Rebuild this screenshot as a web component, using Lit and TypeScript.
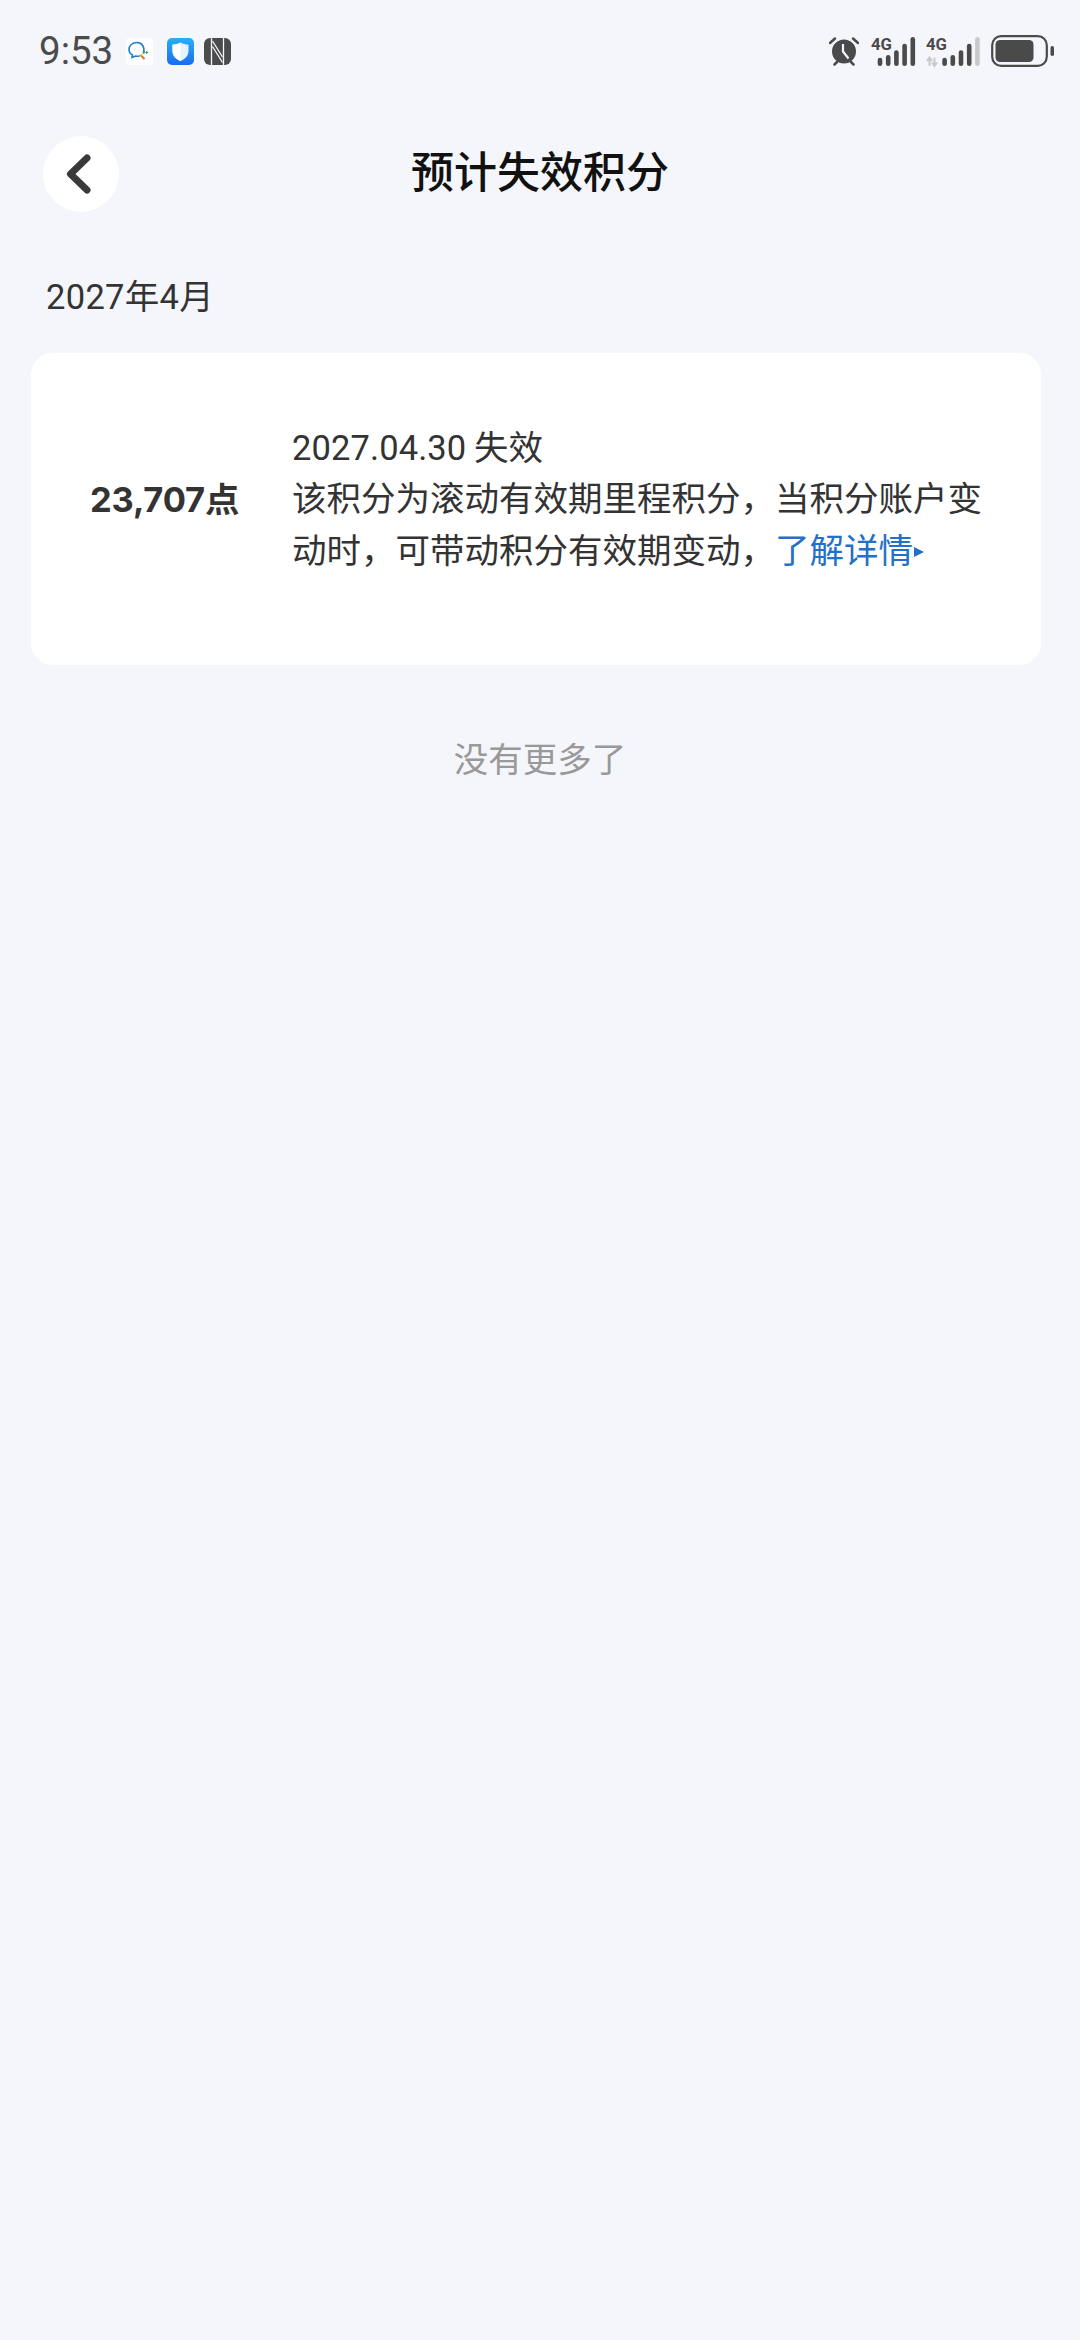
import { LitElement, html, css, svg } from "lit";
import { customElement } from "lit/decorators.js";

const signal = (second: boolean) => {
  const start = second ? 16.3 : 6.7;
  const heights = [8.3, 11, 15.7, 22.3, 29];
  return svg`
  <svg class="sig" width="${second ? 53 : 43}" height="29" viewBox="0 0 ${second ? 53 : 43} 29">
    <text x="0" y="13" textLength="21" lengthAdjust="spacingAndGlyphs" font-family="Roboto, sans-serif" font-weight="700" font-size="17" fill="#4a4a4a">4G</text>
    ${second ? svg`<path d="M3.500 29V21M1 24L3.500 20.500L6 24M8.500 20.500V28.500M6 25.500L8.500 29L11 25.500" stroke="#c9c9c9" stroke-width="2" fill="none"/>` : ""}
    ${heights.map((h, i) => svg`<rect x="${start + i * 8.2}" y="${29 - h}" width="4.600" height="${h}" rx="2.300" fill="${second && i === 4 ? "#c9c9c9" : "#4a4a4a"}"/>`)}
  </svg>`;
};

@customElement("app-root")
export class AppRoot extends LitElement {
  static styles = css`
    :host {
      display: block;
      width: 1080px;
      height: 2340px;
      background: #f4f6fb;
      font-family: "Noto Sans CJK SC", "Noto Sans", sans-serif;
      color: #333;
      overflow: hidden;
    }
    .status {
      height: 102px;
      box-sizing: border-box;
      padding: 24px 26px 0 39px;
      display: flex;
      align-items: flex-start;
      justify-content: space-between;
    }
    .left, .right { display: flex; align-items: center; height: 54px; }
    .right { gap: 12px; }
    .time {
      font-family: "Roboto", sans-serif;
      font-size: 38.5px;
      line-height: 54px;
      color: #4b4b4b;
      width: 87px;
    }
    .app { width: 27px; height: 27px; display: block; }
    .a2 { margin-left: 14px; }
    .a3 { margin-left: 10px; }
    .right svg { display: block; }
    .right .sig { overflow: visible; }
    .header {
      height: 114px;
      margin-top: 14px;
      box-sizing: border-box;
      padding-bottom: 9px;
      position: relative;
      display: flex;
      align-items: center;
      justify-content: center;
    }
    .back {
      position: absolute;
      left: 43px;
      top: 20px;
      width: 76px;
      height: 76px;
      border-radius: 50%;
      background: #fff;
      display: flex;
      align-items: center;
      justify-content: center;
    }
    h1 {
      margin: 0;
      font-size: 43px;
      line-height: 60px;
      font-weight: 500;
      color: #111;
    }
    .month {
      margin: 41px 0 0 46px;
      font-size: 34.5px;
      line-height: 52px;
      color: #333;
      font-family: "Roboto", "Noto Sans CJK SC", sans-serif;
      letter-spacing: 0.3px;
    }
    .card {
      margin: 30px 39px 0 31px;
      height: 312px;
      box-sizing: border-box;
      padding-bottom: 24px;
      background: #fff;
      border-radius: 22px;
      display: flex;
      align-items: center;
    }
    .pts {
      width: 261px;
      flex: none;
      box-sizing: border-box;
      padding-left: 59px;
      font-size: 34.5px;
      font-weight: 700;
      color: #333;
      white-space: nowrap;
      font-family: "Inter", "Noto Sans CJK SC", sans-serif;
      letter-spacing: -0.2px;
    }
    .desc {
      font-size: 34.5px;
      line-height: 51.5px;
      color: #333;
      width: 710px;
    }
    .num {
      font-family: "Roboto", "Noto Sans CJK SC", sans-serif;
      line-height: 0;
      letter-spacing: 0.1px;
    }
    .link { color: #2470c8; }
    .tri {
      display: inline-block;
      width: 10px;
      height: 10px;
      margin-left: 1px;
      vertical-align: 6px;
    }
    .more {
      margin-top: 66px;
      text-align: center;
      font-size: 34.5px;
      line-height: 52px;
      color: #999;
    }
  `;

  render() {
    return html`
      <div class="status">
        <div class="left">
          <span class="time">9:53</span>
          <svg class="app" viewBox="0 0 27 27">
            <rect width="27" height="27" rx="4" fill="#fff"/>
            <path d="M17.500 14.500C19 9 16 4.500 11 4.500C6.500 4.500 3 7.500 3 11.500C3 14 4.500 16 6.500 17L6 19.500L9.500 18C11 18.300 13 18.300 14.500 17.600" fill="none" stroke="#1e7fd0" stroke-width="1.600"/>
            <path d="M20 13l2.500 1.500-2.500 1.500z" fill="#1e7fd0"/>
            <path d="M19 13.500l-2 2" stroke="#55a832" stroke-width="2"/>
            <path d="M16 16.500l-1.500 1.500" stroke="#f0b429" stroke-width="2"/>
            <path d="M15.500 18l3 3" stroke="#e0702a" stroke-width="2"/>
          </svg>
          <svg class="app a2" viewBox="0 0 27 27">
            <defs><linearGradient id="sg" x1="0" y1="0" x2="0" y2="1"><stop offset="0" stop-color="#26b0f5"/><stop offset="1" stop-color="#1a6cf0"/></linearGradient></defs>
            <rect width="27" height="27" rx="5" fill="url(#sg)"/>
            <path d="M13.500 4.500C16 6 18.500 6.500 21.500 6.800V13C21.500 18 18 21 13.500 23C9 21 5.500 18 5.500 13V6.800C8.500 6.500 11 6 13.500 4.500Z" fill="#e4f2fd"/>
            <path d="M13.500 4.500C11 6 8.500 6.500 5.500 6.800V13C5.500 18 9 21 13.500 23Z" fill="#fff"/>
          </svg>
          <svg class="app a3" viewBox="0 0 27 27">
            <rect width="27" height="27" rx="6" fill="#4b4b4b"/>
            <path d="M7.500 0V27M19.500 0V27" stroke="#f4f6fb" stroke-width="1.300"/>
            <path d="M8.500 3L18.500 19M8.500 8.500L18.500 24.500" stroke="#f4f6fb" stroke-width="1.300" fill="none"/>
          </svg>
        </div>
        <div class="right">
          <svg width="30" height="30" viewBox="0 0 30 30">
            <circle cx="15" cy="15.500" r="12" fill="#4a4a4a"/>
            <path d="M1 7L6 2.500M29 7L24 2.500M5.500 28.500L8 26M24.500 28.500L22 26" stroke="#4a4a4a" stroke-width="2.500" stroke-linecap="round"/>
            <path d="M14 8V15.500L19.500 22.500" stroke="#f4f6fb" stroke-width="2.200" fill="none"/>
          </svg>
          ${signal(false)}
          ${signal(true)}
          <svg width="63" height="32" viewBox="0 0 63 32">
            <rect x="1.200" y="1.200" width="54.600" height="29.600" rx="9" fill="none" stroke="#4a4a4a" stroke-width="2.200"/>
            <rect x="4.500" y="5" width="38" height="22" rx="4.500" fill="#4a4a4a"/>
            <rect x="59.500" y="11" width="3.500" height="10" rx="1.750" fill="#4a4a4a"/>
          </svg>
        </div>
      </div>
      <div class="header">
        <div class="back">
          <svg width="30" height="40" viewBox="0 0 30 40">
            <path d="M21 4L4.500 20L21 36" fill="none" stroke="#3a3a3a" stroke-width="7" stroke-linecap="round" stroke-linejoin="round"/>
          </svg>
        </div>
        <h1>预计失效积分</h1>
      </div>
      <div class="month">2027年4月</div>
      <div class="card">
        <div class="pts">23,707点</div>
        <div class="desc">
          <span class="num">2027.04.30</span> 失效<br />该积分为滚动有效期里程积分，当积分账户变<br />动时，可带动积分有效期变动，<span class="link">了解详情<svg class="tri" viewBox="0 0 10 10"><path d="M0 0L10 5L0 10Z" fill="#2470c8"/></svg></span>
        </div>
      </div>
      <div class="more">没有更多了</div>
    `;
  }
}
